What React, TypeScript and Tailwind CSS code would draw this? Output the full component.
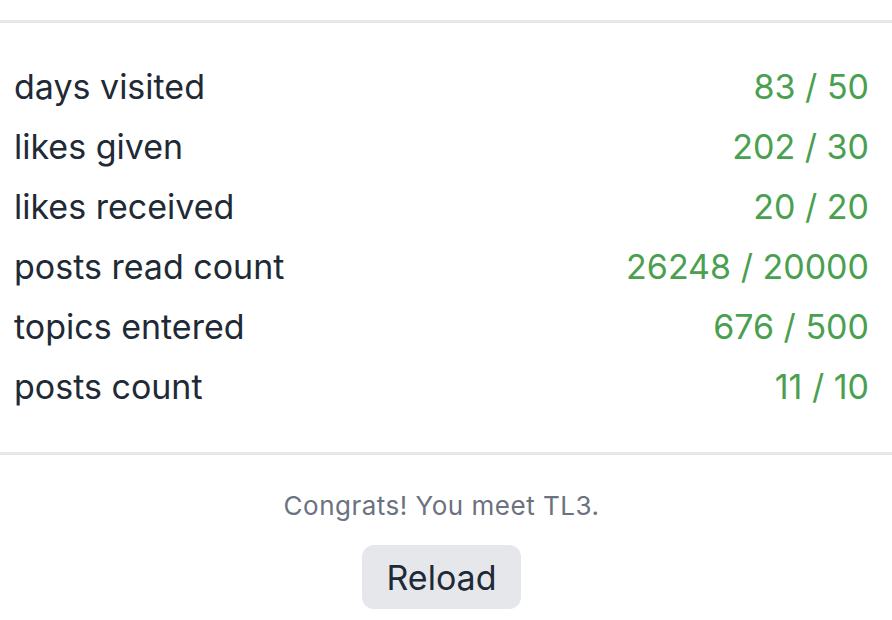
const rows = [
  { label: "days visited", value: "83 / 50" },
  { label: "likes given", value: "202 / 30" },
  { label: "likes received", value: "20 / 20" },
  { label: "posts read count", value: "26248 / 20000" },
  { label: "topics entered", value: "676 / 500" },
  { label: "posts count", value: "11 / 10" },
];

export default function App() {
  return (
    <div className="h-[620px] w-[892px] overflow-hidden bg-white font-['Inter',sans-serif]">
      <div className="h-[20px]" />
      <div className="border-t-[3px] border-[#e5e7eb]" />
      <div className="flex flex-col pl-[14px] pr-[23px] pt-[34px] pb-[35px]">
        {rows.map((row) => (
          <div key={row.label} className="flex h-[60px] items-center justify-between text-[34px] leading-none">
            <span className="text-[#1f2a37]">{row.label}</span>
            <span className="text-[#4a9f50]">{row.value}</span>
          </div>
        ))}
      </div>
      <div className="border-t-[3px] border-[#e5e7eb]" />
      <div className="flex flex-col items-center pr-[9px] pt-[38px]">
        <p className="text-[26px] leading-none tracking-[0.5px] text-[#6b7280]">Congrats! You meet TL3.</p>
        <button
          type="button"
          className="mt-[26px] h-[64px] w-[159px] rounded-[12px] bg-[#e5e7eb] text-[34px] text-[#1f2a37]"
        >
          Reload
        </button>
      </div>
    </div>
  );
}
